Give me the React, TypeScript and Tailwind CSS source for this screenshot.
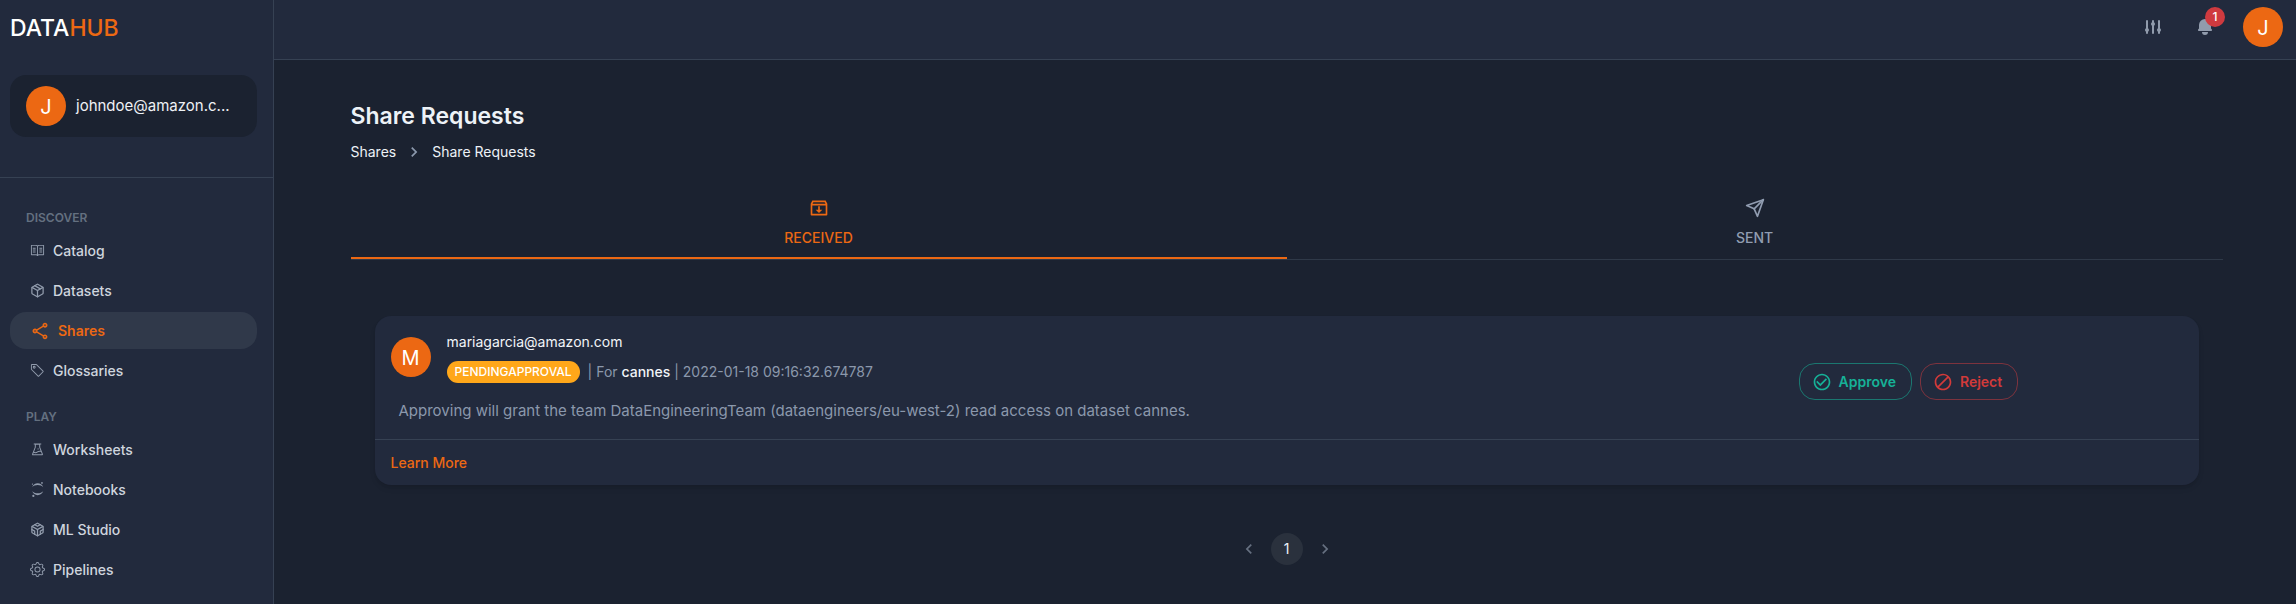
import React from 'react';
import { AiOutlineExperiment } from 'react-icons/ai';
import { BsGear, BsTag } from 'react-icons/bs';
import { FiCodesandbox, FiPackage, FiSend } from 'react-icons/fi';
import { HiAdjustments, HiBell } from 'react-icons/hi';
import {
  MdBlock,
  MdCheckCircleOutline,
  MdChevronLeft,
  MdChevronRight,
  MdOutlineShare,
} from 'react-icons/md';
import { RiInboxArchiveLine } from 'react-icons/ri';
import { SiJupyter } from 'react-icons/si';
import { VscBook } from 'react-icons/vsc';
import type { IconType } from 'react-icons';

type Item = { label: string; icon: IconType; active?: boolean };

const sections: { title: string; items: Item[] }[] = [
  {
    title: 'DISCOVER',
    items: [
      { label: 'Catalog', icon: VscBook },
      { label: 'Datasets', icon: FiPackage },
      { label: 'Shares', icon: MdOutlineShare, active: true },
      { label: 'Glossaries', icon: BsTag },
    ],
  },
  {
    title: 'PLAY',
    items: [
      { label: 'Worksheets', icon: AiOutlineExperiment },
      { label: 'Notebooks', icon: SiJupyter },
      { label: 'ML Studio', icon: FiCodesandbox },
      { label: 'Pipelines', icon: BsGear },
    ],
  },
];

function Avatar({ letter }: { letter: string }) {
  return (
    <span className="flex size-10 shrink-0 items-center justify-center rounded-full bg-[#ec6813] pt-0.5 text-xl font-normal text-white">
      {letter}
    </span>
  );
}

function NavItem({ label, icon: Icon, active }: Item) {
  return (
    <li>
      <a
        href="#"
        aria-current={active ? 'page' : undefined}
        className={
          active
            ? 'flex h-[37px] items-center gap-2 rounded-2xl bg-[#30394a] pl-5 text-sm font-semibold text-[#ec6813]'
            : 'flex h-[37px] items-center gap-2 rounded-2xl pl-5 text-sm font-medium text-[#cfd5de]'
        }
      >
        <Icon className={active ? 'size-5' : 'size-[15px] text-[#919bac]'} />
        <span>{label}</span>
      </a>
    </li>
  );
}

function Sidebar() {
  return (
    <aside className="flex w-[274px] shrink-0 flex-col border-r border-[#364153] bg-[#222a3d]">
      <div className="px-[10px] pt-3 text-[23px] font-medium leading-8 text-white">
        DATA<span className="text-[#ec6813]">HUB</span>
      </div>
      <div className="border-b border-[#364153] pt-[31px] pr-4 pb-10 pl-[10px]">
        <div className="flex items-center gap-[10px] rounded-2xl bg-[#1b2230] px-4 py-[11px]">
          <Avatar letter="J" />
          <span className="text-[15px] text-[#eef1f5]">johndoe@amazon.c...</span>
        </div>
      </div>
      <nav className="flex flex-col gap-[18px] pt-[30px] pr-4 pl-[10px]">
        {sections.map((section) => (
          <section key={section.title}>
            <h2 className="pl-4 text-xs font-semibold leading-5 text-[#647080]">{section.title}</h2>
            <ul className="mt-1 flex flex-col gap-[3px]">
              {section.items.map((item) => (
                <NavItem key={item.label} {...item} />
              ))}
            </ul>
          </section>
        ))}
      </nav>
    </aside>
  );
}

function Header() {
  return (
    <header className="flex h-[60px] items-center justify-end border-b border-[#364153] bg-[#222a3d] pr-[13px] pb-[5px] text-[#919bac]">
      <button aria-label="Settings" className="mr-8">
        <HiAdjustments className="size-5" />
      </button>
      <button aria-label="Notifications" className="relative mr-7">
        <HiBell className="size-5" />
        <span className="absolute -top-[10px] left-[10px] flex size-5 items-center justify-center rounded-full bg-[#cf3a3f] text-xs font-medium text-white">
          1
        </span>
      </button>
      <button aria-label="Account">
        <Avatar letter="J" />
      </button>
    </header>
  );
}

function ShareCard() {
  return (
    <article className="rounded-2xl bg-[#222a3d] shadow-md">
      <div className="flex items-center border-b border-[#364153]">
        <div className="min-w-0 flex-1 px-4 pt-[15px] pb-4">
          <div className="flex items-center gap-4">
            <Avatar letter="M" />
            <div className="flex flex-col gap-2">
              <a href="#" className="text-sm leading-[22px] text-[#f1f4f8]">
                mariagarcia@amazon.com
              </a>
              <div className="flex items-center gap-2">
                <span className="flex h-[22px] items-center rounded-full bg-[#ffa71a] px-2 text-xs font-medium text-white">
                  PENDINGAPPROVAL
                </span>
                <p className="text-sm leading-[22px] text-[#8b98ac]">
                  | For <a href="#" className="font-medium text-[#f1f4f8]">cannes</a> | 2022-01-18 09:16:32.674787
                </p>
              </div>
            </div>
          </div>
          <p className="mt-4 pl-2 text-[15px] leading-6 text-[#8b98ac]">
            Approving will grant the team DataEngineeringTeam (dataengineers/eu-west-2) read access on dataset cannes.
          </p>
        </div>
        <div className="flex w-[400px] shrink-0 gap-2 pt-2">
          <button className="flex h-[37px] items-center gap-[7px] rounded-2xl border border-[#1b7770] px-3 pr-[15px] text-sm font-semibold text-[#16b197]">
            <MdCheckCircleOutline className="size-5" />
            Approve
          </button>
          <button className="flex h-[37px] items-center gap-[7px] rounded-2xl border border-[#7d333e] px-3 pr-[15px] text-sm font-semibold text-[#d23a3a]">
            <MdBlock className="size-5" />
            Reject
          </button>
        </div>
      </div>
      <div className="flex h-[45px] items-center px-4">
        <a href="#" className="text-sm font-medium text-[#ec6813]">
          Learn More
        </a>
      </div>
    </article>
  );
}

export default function App() {
  return (
    <div className="flex min-h-screen bg-[#1b2230] font-['Inter',sans-serif]">
      <Sidebar />
      <div className="min-w-0 flex-1">
        <Header />
        <main className="pl-[3px]">
          <div className="mx-auto max-w-[1920px] px-6 pt-10">
            <h1 className="text-[23px] font-semibold leading-8 text-[#edf2f7]">Share Requests</h1>
            <nav aria-label="Breadcrumb" className="mt-2 flex items-center gap-2 text-sm leading-6 text-[#edf2f7]">
              <a href="#">Shares</a>
              <MdChevronRight className="size-5 text-[#8b98ac]" />
              <a href="#">Share Requests</a>
            </nav>
            <div role="tablist" className="mt-6 grid grid-cols-2 border-b border-[#2f3948] text-sm font-medium">
              <button
                role="tab"
                aria-selected="true"
                className="flex h-[71px] flex-col items-center gap-[10px] border-b-2 border-[#ec6813] pt-[10px] text-[#ec6813]"
              >
                <RiInboxArchiveLine className="size-5" />
                RECEIVED
              </button>
              <button
                role="tab"
                aria-selected="false"
                className="flex h-[71px] flex-col items-center gap-[10px] pt-[10px] text-[#919db1]"
              >
                <FiSend className="size-5" />
                SENT
              </button>
            </div>
            <div className="px-6 pt-14">
              <ShareCard />
            </div>
            <nav aria-label="Pagination" className="mt-12 flex items-center justify-center gap-[6px] text-[#667080]">
              <button aria-label="Previous page" className="flex size-8 items-center justify-center">
                <MdChevronLeft className="size-5" />
              </button>
              <button
                aria-current="page"
                className="flex size-8 items-center justify-center rounded-full bg-[#2a313d] text-sm text-[#edf2f7]"
              >
                1
              </button>
              <button aria-label="Next page" className="flex size-8 items-center justify-center">
                <MdChevronRight className="size-5" />
              </button>
            </nav>
          </div>
        </main>
      </div>
    </div>
  );
}
